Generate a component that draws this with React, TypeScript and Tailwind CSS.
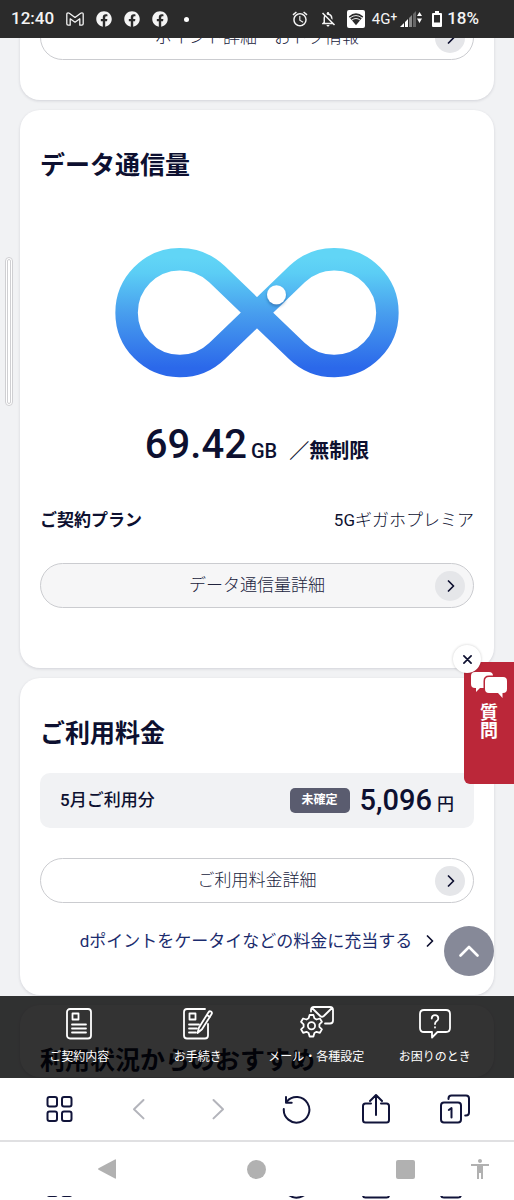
import type { ReactNode } from "react";
import { FaFacebook } from "react-icons/fa";
import { MdAccessibility, MdAlarm, MdOutlineNotificationsOff } from "react-icons/md";

const line = {
  fill: "none",
  stroke: "currentColor",
  strokeLinecap: "round" as const,
  strokeLinejoin: "round" as const,
};

function StatusBar() {
  return (
    <header className="flex h-[38px] shrink-0 items-center justify-between bg-[#2b2b2b] pr-[35px] pl-[11px] text-[17px] font-medium text-[#f4f4f4]">
      <div className="flex items-center gap-3">
        <span>12:40</span>
        <svg className="h-[14px] w-[18px]" viewBox="0 0 18 14" {...line} strokeWidth="1.3">
          <path d="M.8 2.200v9.600q0 1.400 1.400 1.400h2V6.800L9 10.200l4.800-3.400v6.400h2q1.400 0 1.400-1.400V2.200Q17.200.8 15.900.8q-.6 0-1.200.4L9 5.400 3.300 1.200Q2.700.8 2.100.8.8.8.8 2.200Z" />
        </svg>
        <FaFacebook className="size-4" />
        <FaFacebook className="size-4" />
        <FaFacebook className="size-4" />
        <span className="ml-1 size-[5px] rounded-full bg-white" />
      </div>
      <div className="flex items-center gap-[10px]">
        <MdAlarm className="size-[18px]" />
        <MdOutlineNotificationsOff className="size-[18px]" />
        <div className="flex items-center">
          <svg className="mr-[7px] size-[18px]" viewBox="0 0 18 18">
            <rect width="18" height="18" rx="2" fill="#fff" />
            <path d="M1.800 6.500Q9 .2 16.200 6.500L9 15.200Z" fill="#2b2b2b" />
            <path d="M3 7.900q6-4.700 12 0M4.800 10.100q4.200-3.200 8.400 0" fill="none" stroke="#fff" strokeWidth=".9" />
          </svg>
          <span className="text-[15px] font-normal">4G</span>
          <span className="-mt-1 mr-[3px] text-xs">+</span>
          <svg className="h-4 w-[22px]" viewBox="0 0 22 16">
            <path d="M0 16 4 12v4Z M5 11l3-3v8H5Z" fill="#fff" />
            <path d="M9 7l3-3v12H9Z" fill="#8a8a8a" />
            <path d="M13 3l3-3v16h-3Z" fill="#666" />
            <path d="m19.500 1 2.500 4h-5Zm0 11L17 7.500h5Z" fill="#fff" />
          </svg>
        </div>
        <div className="flex items-center gap-[5px]">
          <svg className="h-4 w-[10px]" viewBox="0 0 10 16">
            <path d="M3 0h4v2h2q1 0 1 1v12q0 1-1 1H1q-1 0-1-1V3q0-1 1-1h2ZM2 4v7.500h6V4Z" fill="#fff" fillRule="evenodd" />
          </svg>
          <span>18%</span>
        </div>
      </div>
    </header>
  );
}

function Chevron({ className }: { className: string }) {
  return (
    <svg className={className} viewBox="0 0 8 12" {...line} strokeWidth="1.700">
      <path d="m1.500 1 5 5-5 5" />
    </svg>
  );
}

function PillButton({ children, tinted = false }: { children: ReactNode; tinted?: boolean }) {
  return (
    <button
      type="button"
      className={`flex h-[45px] w-full items-center rounded-full border border-[#cbccd0] pr-2 pl-[38px] text-[17px] font-light text-[#20233d] ${tinted ? "bg-[#f6f6f7]" : "bg-white"}`}
    >
      <span className="flex-1">{children}</span>
      <span className="flex size-[30px] items-center justify-center rounded-full bg-[#e5e6e9] pl-px text-[#0d1030]">
        <Chevron className="h-3 w-2" />
      </span>
    </button>
  );
}

function Card({ title, children }: { title: string; children?: ReactNode }) {
  return (
    <section className="rounded-[20px] bg-white px-5 pt-10 shadow-[0_1px_3px_rgba(20,20,50,0.14)]">
      <h2 className="text-[25px] leading-8 font-bold">{title}</h2>
      {children}
    </section>
  );
}

function InfinityMeter() {
  return (
    <svg className="mx-auto mt-[66px] h-[130px] w-[284px]" viewBox="0 0 284 130" role="img" aria-label="無制限">
      <defs>
        <linearGradient id="loop" gradientUnits="userSpaceOnUse" x1="0" y1="10" x2="0" y2="120">
          <stop offset="0" stopColor="#61d5f6" />
          <stop offset=".14" stopColor="#5bcdf5" />
          <stop offset=".5" stopColor="#489eee" />
          <stop offset="1" stopColor="#2b68ea" />
        </linearGradient>
        <filter id="knob" x="-50%" y="-50%" width="200%" height="200%">
          <feDropShadow dx="0" dy="2" stdDeviation="1.500" floodColor="#123f7c" floodOpacity=".45" />
        </filter>
      </defs>
      <path
        d="M102 26.200A53.400 53.400 0 1 0 102 103.200L182 26.200A53.400 53.400 0 1 1 182 103.200Z"
        fill="none"
        stroke="url(#loop)"
        strokeWidth="22.500"
      />
      <circle cx="161.500" cy="46.700" r="9.500" fill="#fff" filter="url(#knob)" />
    </svg>
  );
}

function DataCard() {
  return (
    <Card title="データ通信量">
      <InfinityMeter />
      <p className="mt-[42px] flex items-baseline justify-center leading-[50px]">
        <span className="text-[40px] font-medium">69.42</span>
        <span className="ml-1 text-[20px] font-medium">GB</span>
        <span className="ml-3 text-[20px] font-bold">／無制限</span>
      </p>
      <dl className="mt-8 flex items-center justify-between text-[17px] leading-6">
        <dt className="font-bold">ご契約プラン</dt>
        <dd>
          5G<span className="font-light">ギガホプレミア</span>
        </dd>
      </dl>
      <div className="pt-[31px] pb-[60px]">
        <PillButton tinted>データ通信量詳細</PillButton>
      </div>
    </Card>
  );
}

function BillingCard() {
  return (
    <Card title="ご利用料金">
      <div className="mt-[23px] flex h-[55px] items-center rounded-[10px] bg-[#f1f2f4] px-5">
        <span className="flex-1 text-[17px] font-medium">5月ご利用分</span>
        <span className="rounded-[5px] bg-[#5a5c6f] px-3 text-xs leading-[25px] font-bold text-white">未確定</span>
        <span className="ml-[10px] flex items-baseline">
          <span className="text-[29px] font-medium">5,096</span>
          <span className="ml-[5px] text-[17px] font-medium">円</span>
        </span>
      </div>
      <div className="pt-[30px]">
        <PillButton>ご利用料金詳細</PillButton>
      </div>
      <a href="#points" className="mt-[26px] mb-[42px] flex items-center justify-center gap-[14px] text-[17px] leading-6 text-[#1b2c6e]">
        dポイントをケータイなどの料金に充当する
        <Chevron className="h-3 w-2 text-[#0d1030]" />
      </a>
    </Card>
  );
}

function QuestionTab() {
  return (
    <div className="absolute top-[607px] right-0 pt-[17px]">
      <button
        type="button"
        className="flex h-[122px] w-[50px] flex-col items-center rounded-bl-[6px] bg-[#bb2739] pt-[9px] text-white"
      >
        <svg className="h-[27px] w-9" viewBox="0 0 36 27">
          <path d="M4 1h14q4 0 4 4v8q0 4-4 4H9l-4 4v-4H4q-4 0-4-4V5q0-4 4-4Z" fill="#fff" />
          <path
            d="M18 6h14q4 0 4 4v8q0 4-4 4h-.5v5L27 22h-9q-4 0-4-4v-8q0-4 4-4Z"
            fill="#fff"
            stroke="#bb2739"
            strokeWidth="3"
            paintOrder="stroke"
          />
        </svg>
        <span className="mt-[6px] text-[18px] leading-[18px] font-bold">
          質
          <br />問
        </span>
      </button>
      <button
        type="button"
        aria-label="閉じる"
        className="absolute top-0 -left-[11px] flex size-7 items-center justify-center rounded-full bg-white text-[#0d1030] shadow-[0_0_3px_rgba(0,0,0,0.2)]"
      >
        <svg className="size-[9px]" viewBox="0 0 8 8" {...line} strokeWidth="1.500">
          <path d="m.8.8 6.400 6.400M7.200.8.8 7.200" />
        </svg>
      </button>
    </div>
  );
}

const tabs: { label: string; icon: ReactNode }[] = [
  {
    label: "ご契約内容",
    icon: (
      <svg className="h-8 w-[26px]" viewBox="0 0 26 32" {...line} strokeWidth="1.800">
        <rect x="1" y="1" width="24" height="29.500" rx="3" />
        <path d="M6.500 5.500h6v6h-6ZM6 16.500h14M6 20.500h14M6 24.500h14" />
      </svg>
    ),
  },
  {
    label: "お手続き",
    icon: (
      <svg className="h-8 w-[30px]" viewBox="0 0 30 32" {...line} strokeWidth="1.800">
        <path d="M22 1H4Q1 1 1 4v23.500q0 3 3 3h18q3 0 3-3V16" />
        <path d="M6.500 5.500h6v6h-6ZM6 16.500h10M6 20.500h8M6 24.500h7" />
        <path d="m14.500 25 1.500-5.500L25.500 4.200q1-1.500 2.500-.6 1.500 1 .6 2.500L19 21.200ZM23.800 7l3.200 2" />
      </svg>
    ),
  },
  {
    label: "メール・各種設定",
    icon: (
      <svg className="h-9 w-9" viewBox="0 0 36 36" {...line} strokeWidth="1.800">
        <path d="M13 5.500V4q0-3 3-3h16q3 0 3 3v10.500q0 3-3 3h-5M14 2l8.200 8q1.800 1.600 3.600 0L34 2" />
        <path d="m10.600 12.300 1-3.300h3.800l1 3.300 2.100 1.200 3.400-1 2 3.300-2.500 2.600v2.500l2.500 2.500-2 3.400-3.400-1-2.100 1.200-1 3.500h-3.800l-1-3.500-2.100-1.200-3.400 1-2-3.400 2.500-2.500v-2.500l-2.500-2.600 2-3.300 3.400 1Z" />
        <circle cx="13.500" cy="19.700" r="3.600" />
      </svg>
    ),
  },
  {
    label: "お困りのとき",
    icon: (
      <svg className="h-8 w-8" viewBox="0 0 32 32" {...line} strokeWidth="1.800">
        <path d="M5 2h22q4 0 4 4v14q0 4-4 4h-8.500L13 29.500V24H5q-4 0-4-4V6q0-4 4-4Z" />
        <path d="M12.700 10.500q.2-3.300 3.300-3.300t3.300 3q0 1.700-1.600 2.900-1.700 1.200-1.700 2.900M16 19.200v.3" />
      </svg>
    ),
  },
];

function ServiceTabs() {
  return (
    <nav className="absolute inset-x-0 bottom-0 grid h-[82px] grid-cols-4 bg-black/80 px-5 text-white">
      {tabs.map((tab) => (
        <a key={tab.label} href="#service" className="flex flex-col items-center pt-[10px]">
          <span className="flex h-9 items-center">{tab.icon}</span>
          <span className="mt-[6px] text-xs leading-[18px] whitespace-nowrap">{tab.label}</span>
        </a>
      ))}
    </nav>
  );
}

const browserActions: { label: string; muted?: boolean; icon: ReactNode }[] = [
  {
    label: "メニュー",
    icon: (
      <>
        <rect x="2.500" y="3" width="9.500" height="9.500" rx="2" />
        <rect x="17" y="3" width="9.500" height="9.500" rx="2" />
        <rect x="2.500" y="17.500" width="9.500" height="9.500" rx="2" />
        <rect x="17" y="17.500" width="9.500" height="9.500" rx="2" />
      </>
    ),
  },
  { label: "戻る", muted: true, icon: <path d="m19.500 6-9.500 9.200 9.500 9.200" /> },
  { label: "進む", muted: true, icon: <path d="m10.500 6 9.500 9.200-9.500 9.200" /> },
  {
    label: "再読み込み",
    icon: <path d="M1.800 15A12.800 12.800 0 1 0 5 7.300M4 3v5.700h5.700" />,
  },
  {
    label: "共有",
    icon: <path d="M10 9.500H4.500q-2.500 0-2.500 2.500v14q0 2.500 2.500 2.500h21q2.500 0 2.500-2.500V12q0-2.500-2.500-2.500H20M15 21V1M9 7l6-6 6 6" />,
  },
  {
    label: "タブ",
    icon: (
      <>
        <rect x="1" y="8.500" width="20" height="20" rx="3" />
        <path d="M8.500 5V4.500q0-3 3-3H26q3 0 3 3v14q0 3-3 3h-.8" />
        <path d="m8.800 16 2.700-2v9.500" />
      </>
    ),
  },
];

function BrowserBar() {
  return (
    <div className="grid h-[62px] shrink-0 grid-cols-6 bg-white px-5 text-[#11143a]">
      {browserActions.map((action) => (
        <button
          key={action.label}
          type="button"
          aria-label={action.label}
          className={`flex items-center justify-center ${action.muted ? "text-[#b3b4bb]" : ""}`}
        >
          <svg className="size-[30px]" viewBox="0 0 30 30" {...line} strokeWidth="2">
            {action.icon}
          </svg>
        </button>
      ))}
    </div>
  );
}

function SystemBar() {
  return (
    <div className="grid h-14 shrink-0 grid-cols-[151fr_149fr_75fr_43fr] items-center border-t-2 border-[#e0e0e2] bg-white pl-24 text-[#b1b1b1]">
      <button type="button" aria-label="戻る">
        <svg className="size-5" viewBox="0 0 20 20" fill="currentColor">
          <path d="M20 1v18q0 1-1 .5L2.500 10.700q-1-.7 0-1.400L19 .5q1-.5 1 .5Z" />
        </svg>
      </button>
      <button type="button" aria-label="ホーム" className="size-[19px] rounded-full bg-[#b1b1b1]" />
      <button type="button" aria-label="履歴" className="size-[19px] rounded-[2px] bg-[#b1b1b1]" />
      <button type="button" aria-label="ユーザー補助">
        <MdAccessibility className="-ml-[3px] size-6" />
      </button>
    </div>
  );
}

export default function App() {
  return (
    <div className="flex h-screen flex-col overflow-hidden bg-white font-[Roboto,'Noto_Sans_CJK_JP',sans-serif] text-[#0d1030]" lang="ja">
      <StatusBar />
      <main className="relative min-h-0 flex-1 overflow-hidden bg-[#f1f2f4]">
        <div className="-mt-[23px] flex flex-col gap-[10px] px-5">
          <section className="rounded-b-[20px] bg-white px-5 pb-10 shadow-[0_1px_3px_rgba(20,20,50,0.14)]">
            <PillButton>ポイント詳細・おトク情報</PillButton>
          </section>
          <DataCard />
          <BillingCard />
          <Card title="利用状況からのおすすめ" />
        </div>
        <div className="absolute top-[219px] left-[5px] h-[149px] w-2 rounded-full border border-[#cfcfd2] bg-white p-px">
          <div className="h-full rounded-full border border-[#cfcfd2]" />
        </div>
        <QuestionTab />
        <button
          type="button"
          aria-label="ページの先頭へ"
          className="absolute right-5 bottom-[102px] flex size-[50px] items-center justify-center rounded-full bg-[#868998] text-white"
        >
          <svg className="h-3 w-5" viewBox="0 0 20 12" {...line} strokeWidth="2.600">
            <path d="m1.500 10.500 8.500-8.500 8.500 8.500" />
          </svg>
        </button>
        <ServiceTabs />
      </main>
      <BrowserBar />
      <SystemBar />
      <div className="h-1 shrink-0 overflow-hidden" aria-hidden="true">
        <div className="-mt-[43px]">
          <BrowserBar />
        </div>
      </div>
    </div>
  );
}
